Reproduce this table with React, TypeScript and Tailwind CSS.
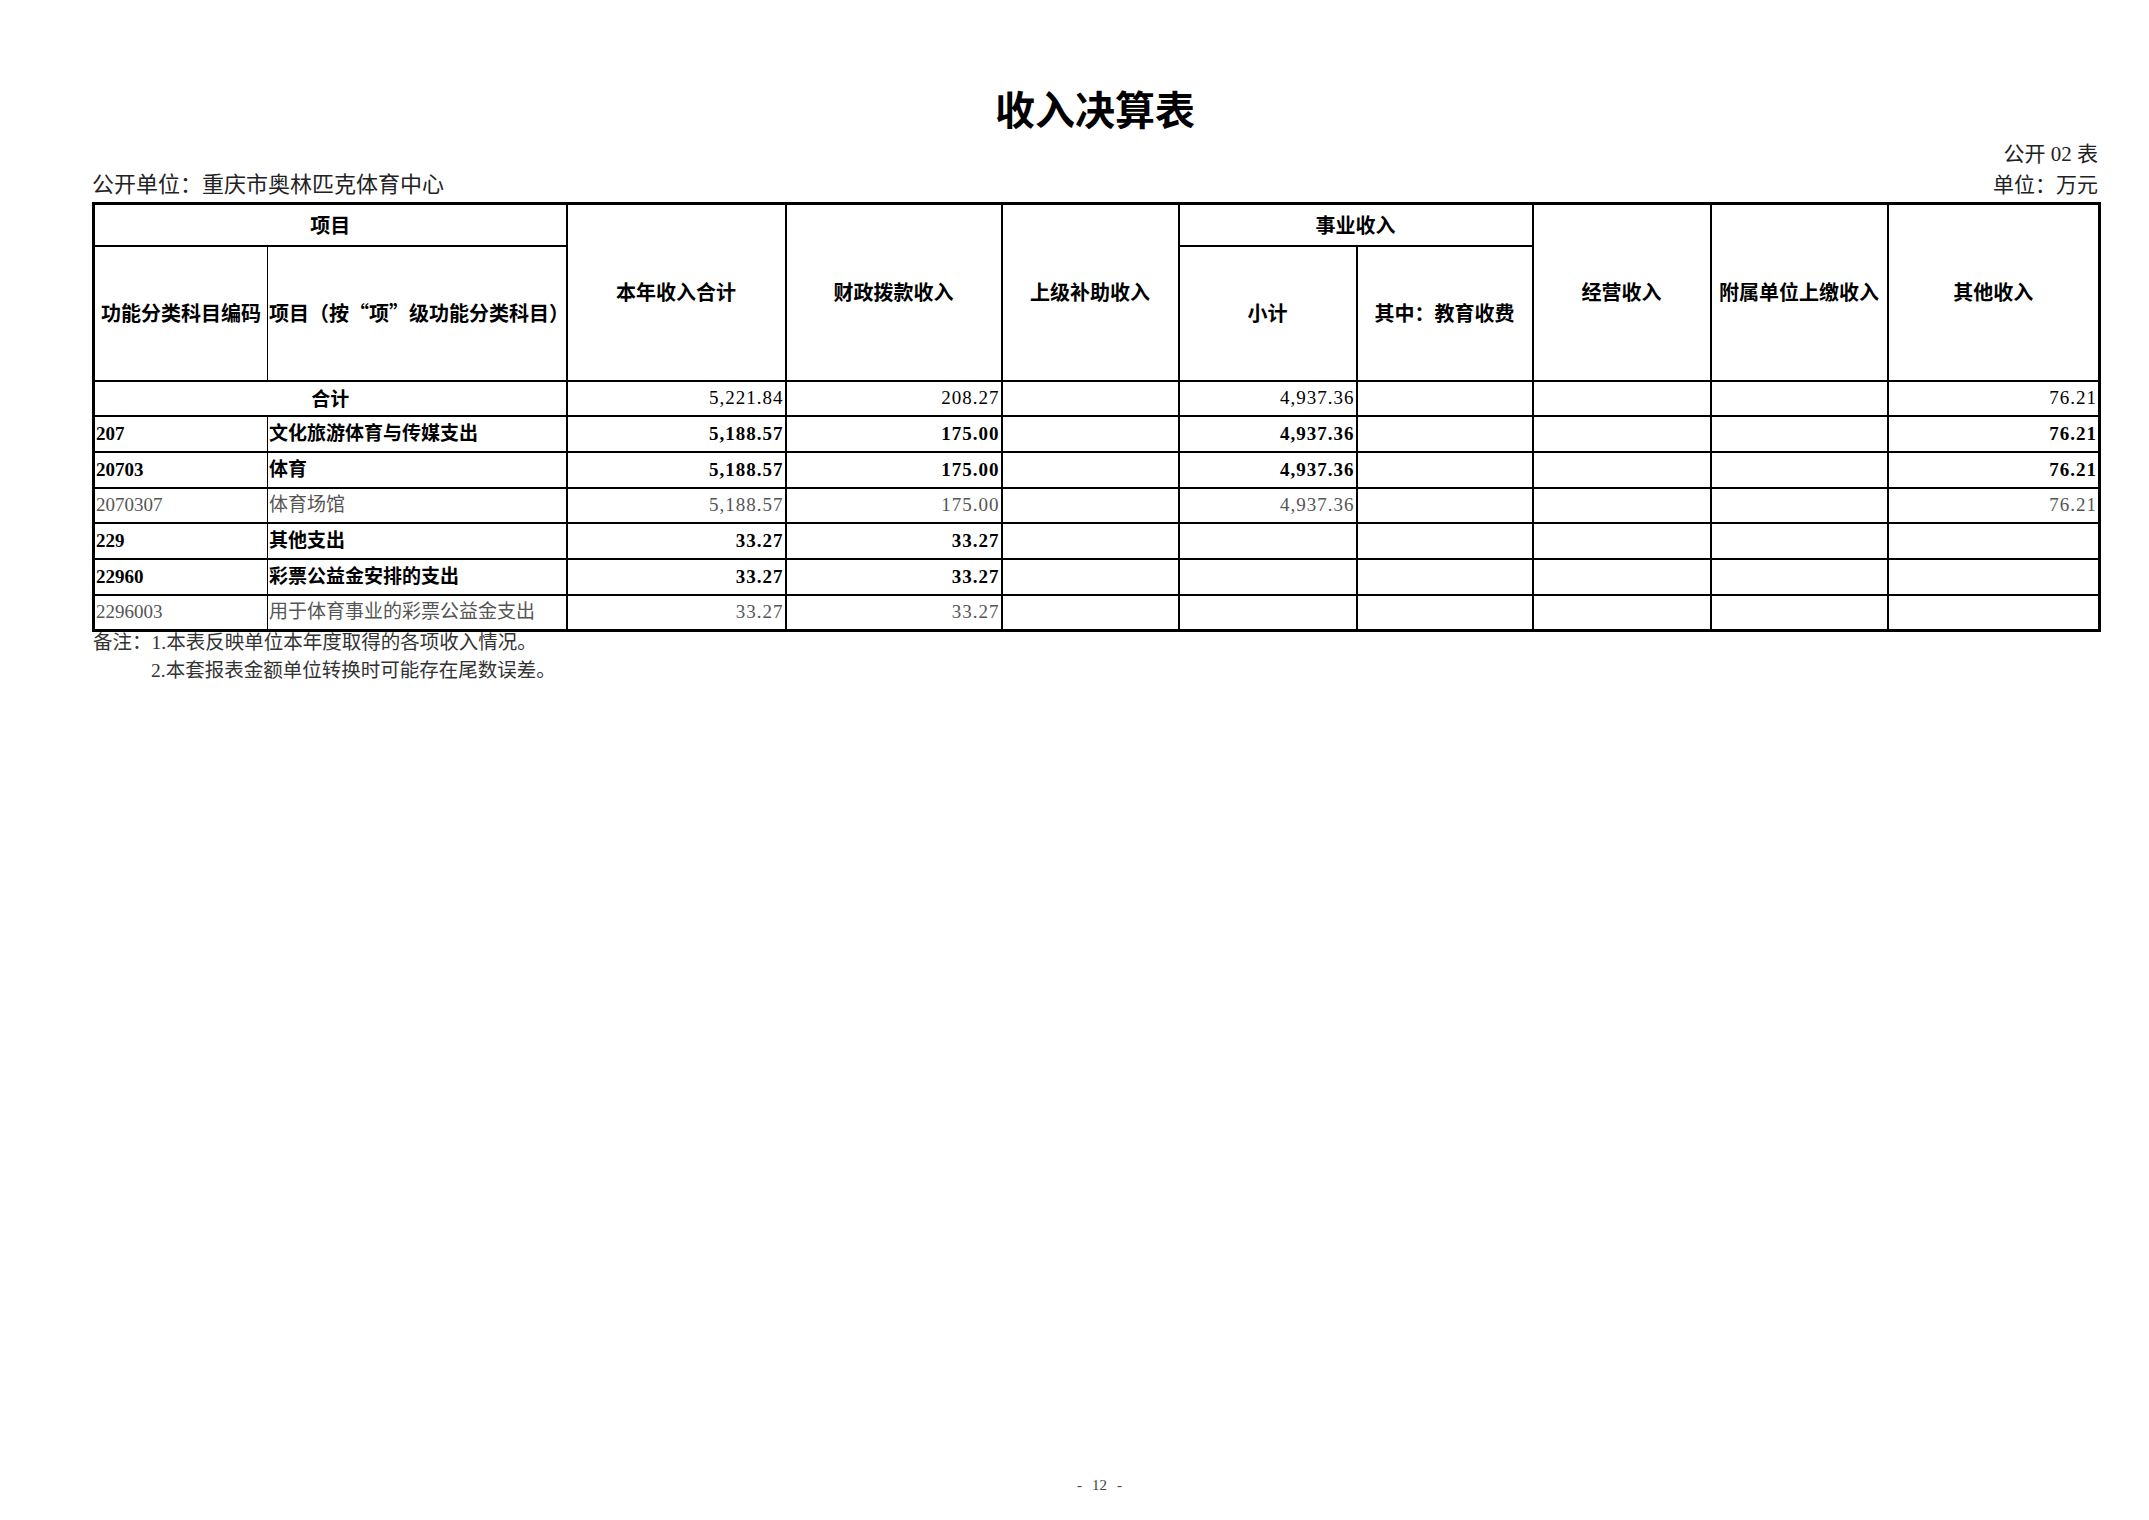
type Row = {
  code: string;
  name: string;
  total: string;
  fiscal: string;
  business: string;
  other: string;
  bold: boolean;
};

const rows: Row[] = [
  { code: '207', name: '文化旅游体育与传媒支出', total: '5,188.57', fiscal: '175.00', business: '4,937.36', other: '76.21', bold: true },
  { code: '20703', name: '体育', total: '5,188.57', fiscal: '175.00', business: '4,937.36', other: '76.21', bold: true },
  { code: '2070307', name: '体育场馆', total: '5,188.57', fiscal: '175.00', business: '4,937.36', other: '76.21', bold: false },
  { code: '229', name: '其他支出', total: '33.27', fiscal: '33.27', business: '', other: '', bold: true },
  { code: '22960', name: '彩票公益金安排的支出', total: '33.27', fiscal: '33.27', business: '', other: '', bold: true },
  { code: '2296003', name: '用于体育事业的彩票公益金支出', total: '33.27', fiscal: '33.27', business: '', other: '', bold: false },
];

const th = 'border-2 border-black align-middle text-center font-bold';
const td = 'border-2 border-black text-right pr-[1px] tracking-[1px] align-middle';

const App = () => {
  return (
    <div className="min-h-[1520px] bg-white flex flex-col text-black font-['Liberation_Serif','Noto_Sans_CJK_SC',serif]">
      <div className="ml-[92px] w-[2006px] flex flex-col">
        {/* 标题 */}
        <h1 className="mt-[88px] text-center text-[40px] leading-[40px] font-bold font-['Noto_Sans_CJK_SC',sans-serif]">
          收入决算表
        </h1>
        <div className="mt-[12px] text-right text-[21px] leading-[28px] text-[#222]">公开 02 表</div>
        <div className="mt-[3px] flex justify-between text-[21px] leading-[28px] text-[#222]">
          <span className="text-[22px]">公开单位：重庆市奥林匹克体育中心</span>
          <span>单位：万元</span>
        </div>

        <table className="mt-[3px] w-[2006px] table-fixed border-collapse border-[3px] border-black text-[19px] leading-[24px]">
          <colgroup>
            <col className="w-[174px]" />
            <col className="w-[299px]" />
            <col className="w-[219px]" />
            <col className="w-[216px]" />
            <col className="w-[177px]" />
            <col className="w-[178px]" />
            <col className="w-[176px]" />
            <col className="w-[178px]" />
            <col className="w-[177px]" />
            <col className="w-[212px]" />
          </colgroup>
          <thead className="text-[20px] font-['Noto_Sans_CJK_SC',sans-serif]">
            <tr className="h-[42px]">
              <th colSpan={2} className={th}>项目</th>
              <th rowSpan={2} className={th}>本年收入合计</th>
              <th rowSpan={2} className={th}>财政拨款收入</th>
              <th rowSpan={2} className={th}>上级补助收入</th>
              <th colSpan={2} className={th}>事业收入</th>
              <th rowSpan={2} className={th}>经营收入</th>
              <th rowSpan={2} className={th}>附属单位上缴收入</th>
              <th rowSpan={2} className={th}>其他收入</th>
            </tr>
            <tr className="h-[135px]">
              <th className="border-y-2 border-l-2 border-r border-black align-middle text-center font-bold">功能分类科目编码</th>
              <th className="border-y-2 border-r-2 border-l border-black align-middle text-left pl-[1px] font-bold whitespace-nowrap">
                项目（按“项”级功能分类科目）
              </th>
              <th className={th}>小计</th>
              <th className={th}>其中：教育收费</th>
            </tr>
          </thead>
          <tbody>
            <tr className="h-[35.7px]">
              <td colSpan={2} className="border-2 border-black text-center font-bold font-['Noto_Sans_CJK_SC',sans-serif]">合计</td>
              <td className={td}>5,221.84</td>
              <td className={td}>208.27</td>
              <td className={td}></td>
              <td className={td}>4,937.36</td>
              <td className={td}></td>
              <td className={td}></td>
              <td className={td}></td>
              <td className={td}>76.21</td>
            </tr>
            {rows.map((r) => (
              <tr key={r.code} className={`h-[35.7px] ${r.bold ? 'font-bold text-black' : 'text-[#555]'}`}>
                <td className="border-y-2 border-l-2 border-r border-black pl-[1px] text-left">{r.code}</td>
                <td className="border-y-2 border-r-2 border-l border-black pl-[1px] text-left whitespace-nowrap">{r.name}</td>
                <td className={td}>{r.total}</td>
                <td className={td}>{r.fiscal}</td>
                <td className={td}></td>
                <td className={td}>{r.business}</td>
                <td className={td}></td>
                <td className={td}></td>
                <td className={td}></td>
                <td className={td}>{r.other}</td>
              </tr>
            ))}
          </tbody>
        </table>

        {/* 备注 */}
        <div className="text-[19.5px] leading-[22px] text-[#333]">
          <div className="ml-[1px]">备注：1.本表反映单位本年度取得的各项收入情况。</div>
          <div className="ml-[59px] mt-[6px]">2.本套报表金额单位转换时可能存在尾数误差。</div>
        </div>
      </div>

      <div className="mt-auto pb-[25px] flex justify-center">
        <div className="ml-[50px] flex gap-[10px] text-[15px] leading-[20px] text-[#444]">
          <span>-</span>
          <span>12</span>
          <span>-</span>
        </div>
      </div>
    </div>
  );
};

export default App;
